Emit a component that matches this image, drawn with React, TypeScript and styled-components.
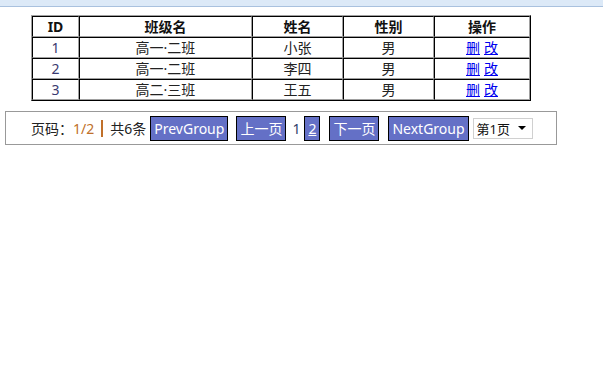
import styled, { createGlobalStyle } from "styled-components"

const Global = createGlobalStyle`
    body {
        margin: 0;
        background: #fff;
        font-family: "Noto Sans", "Noto Sans CJK SC", sans-serif;
        font-size: 14px;
        color: #222;
    }
`

const TopBar = styled.div`
    height: 6px;
    background: #dce9f7;
    border-bottom: 1px solid #a9c1de;
`

const Table = styled.table`
    margin: 8px 0 0 31px;
    width: 500px;
    border-collapse: separate;
    border-spacing: 0;
    border-top: 1px solid #a0a0a0;
    border-left: 1px solid #a0a0a0;
    border-right: 1px solid #000;
    border-bottom: 1px solid #000;
`

const Th = styled.th<{ $w?: number }>`
    width: ${p => (p.$w ? `${p.$w}px` : "auto")};
    height: 19px;
    padding: 0;
    font-size: 14px;
    line-height: 19px;
    font-weight: bold;
    color: #111;
    text-align: center;
    border-top: 1px solid #000;
    border-left: 1px solid #000;
    border-right: 1px solid #a0a0a0;
    border-bottom: 1px solid #a0a0a0;
`

const Td = styled.td`
    height: 19px;
    padding: 0;
    font-size: 14px;
    line-height: 19px;
    text-align: center;
    color: #222;
    border-top: 1px solid #000;
    border-left: 1px solid #000;
    border-right: 1px solid #a0a0a0;
    border-bottom: 1px solid #a0a0a0;
`

const IdCell = styled(Td)`
    color: #3a3a70;
`

const Link = styled.a`
    color: #0000ee;
    text-decoration: underline;
    margin: 0 2px;
`

const Pager = styled.div`
    margin: 10px 0 0 5px;
    width: 552px;
    height: 34px;
    border: 1px solid #999;
    display: flex;
    align-items: center;
    padding-left: 25px;
    box-sizing: border-box;
    font-size: 14px;
`

const Orange = styled.span`
    color: #c0702a;
`

const Bar = styled.span`
    display: inline-block;
    width: 2px;
    height: 17px;
    background: #c0702a;
    margin: 0 7px 0 7px;
`

const Btn = styled.span<{ $ml?: number; $ul?: boolean }>`
    display: inline-flex;
    align-items: center;
    height: 23px;
    padding: 0 3px;
    margin-left: ${p => p.$ml ?? 0}px;
    background: #6470c6;
    border: 1px solid #000;
    color: #fff;
    text-decoration: ${p => (p.$ul ? "underline" : "none")};
    white-space: nowrap;
`

const Current = styled.span`
    color: #2f3f6a;
    margin: 0 4px 0 6px;
`

const Select = styled.div`
    margin-left: 4px;
    width: 60px;
    height: 21px;
    box-sizing: border-box;
    border: 1px solid #d0d0d0;
    display: flex;
    align-items: center;
    justify-content: space-between;
    padding: 0 6px 0 3px;
    font-size: 13px;
    color: #111;
`

const Arrow = styled.span`
    width: 0;
    height: 0;
    border-left: 4px solid transparent;
    border-right: 4px solid transparent;
    border-top: 4px solid #000;
`

const rows = [
    { id: 1, cls: "高一·二班", name: "小张", sex: "男" },
    { id: 2, cls: "高一·二班", name: "李四", sex: "男" },
    { id: 3, cls: "高二·三班", name: "王五", sex: "男" },
]

export default function App() {
    return (
        <>
            <Global />
            <TopBar />
            <Table>
                <thead>
                    <tr>
                        <Th $w={45}>ID</Th>
                        <Th $w={171}>班级名</Th>
                        <Th $w={89}>姓名</Th>
                        <Th $w={89}>性别</Th>
                        <Th>操作</Th>
                    </tr>
                </thead>
                <tbody>
                    {rows.map(r => (
                        <tr key={r.id}>
                            <IdCell>{r.id}</IdCell>
                            <Td>{r.cls}</Td>
                            <Td>{r.name}</Td>
                            <Td>{r.sex}</Td>
                            <Td>
                                <Link href="#">删</Link>
                                <Link href="#">改</Link>
                            </Td>
                        </tr>
                    ))}
                </tbody>
            </Table>
            <Pager>
                <span>页码：</span>
                <Orange>1/2</Orange>
                <Bar />
                <span>共6条</span>
                <Btn $ml={4}>PrevGroup</Btn>
                <Btn $ml={8}>上一页</Btn>
                <Current>1</Current>
                <Btn $ul>2</Btn>
                <Btn $ml={9}>下一页</Btn>
                <Btn $ml={9}>NextGroup</Btn>
                <Select>
                    <span>第1页</span>
                    <Arrow />
                </Select>
            </Pager>
        </>
    )
}
